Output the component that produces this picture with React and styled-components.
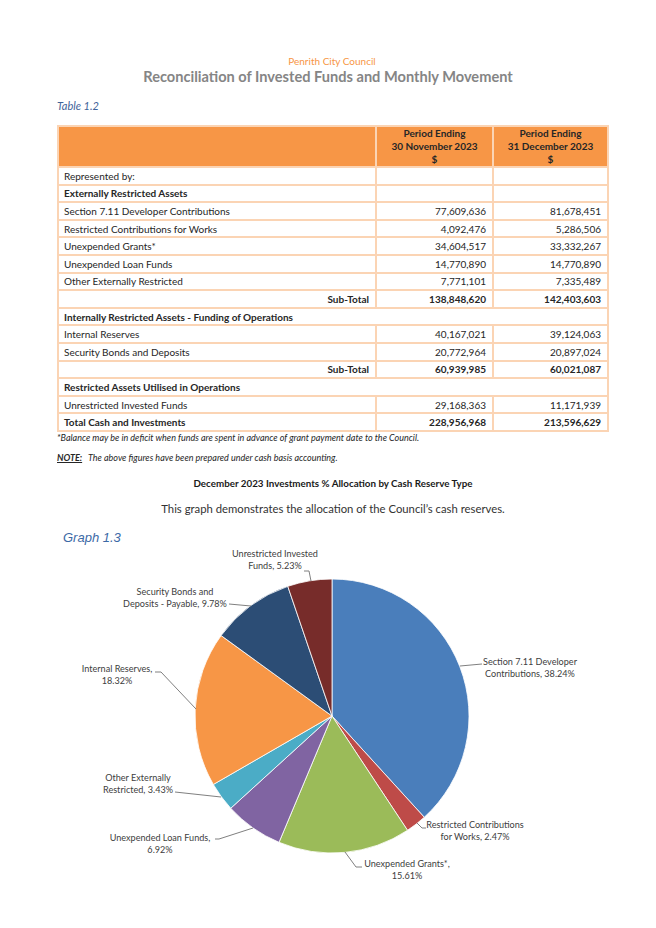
import React from 'react';
import styled, { createGlobalStyle } from 'styled-components';

const GlobalStyle = createGlobalStyle`
  body {
    margin: 0;
    background: #fff;
    font-family: Lato, 'Open Sans', sans-serif;
    color: #262626;
  }
`;

const Page = styled.div`
  width: 656px;
  min-height: 928px;
  box-sizing: border-box;
  padding: 55px 47px 0 57px;
  display: flex;
  flex-direction: column;
`;

const OrgName = styled.div`
  text-align: center;
  font-size: 10px;
  line-height: 12px;
  color: #f79646;
  margin-right: 2px;
`;

const Title = styled.h1`
  margin: 0;
  text-align: center;
  font-size: 14.6px;
  line-height: 20px;
  font-weight: 700;
  color: #858585;
  margin-right: 10px;
`;

const Caption = styled.div`
  margin-top: 12px;
  font-size: 11px;
  line-height: 14px;
  font-style: italic;
  color: #3f6399;
`;

const Grid = styled.div`
  margin-top: 12px;
  width: 552px;
  box-sizing: border-box;
  display: grid;
  grid-template-columns: 316px 115px 113px;
  gap: 2px;
  padding: 2px;
  background: #fbd4b4;
`;

const Cell = styled.div`
  background: ${(p) => (p.$head ? '#f79646' : '#fff')};
  grid-column: ${(p) => (p.$span ? '1 / -1' : 'auto')};
  height: ${(p) => (p.$head ? '39px' : '15.6px')};
  box-sizing: border-box;
  padding: ${(p) => (p.$head ? '0 4px' : '0 6px 0 5px')};
  display: flex;
  flex-direction: ${(p) => (p.$head ? 'column' : 'row')};
  align-items: center;
  justify-content: ${(p) =>
    p.$head ? 'flex-start' : p.$align === 'right' ? 'flex-end' : 'flex-start'};
  font-size: 10px;
  line-height: ${(p) => (p.$head ? '13px' : '14px')};
  font-weight: ${(p) => (p.$bold || p.$head ? 700 : 400)};
  color: #262626;
  white-space: nowrap;
`;

const Footnote = styled.div`
  font-size: 9px;
  line-height: 12px;
  font-style: italic;
  color: #262626;
  margin-top: ${(p) => p.$gap || 0}px;
`;

const NoteTag = styled.span`
  font-weight: 700;
  text-decoration: underline;
  margin-right: 4px;
`;

const ChartTitle = styled.div`
  margin-top: 12px;
  text-align: center;
  font-size: 9.8px;
  line-height: 14px;
  font-weight: 700;
  color: #1a1a1a;
`;

const Subtitle = styled.div`
  margin-top: 11px;
  text-align: center;
  font-size: 11.3px;
  line-height: 16px;
  color: #333;
`;

const GraphLabel = styled.div`
  margin-top: 13px;
  padding-left: 6px;
  font-family: 'Liberation Sans', Arial, sans-serif;
  font-size: 13px;
  line-height: 16px;
  font-style: italic;
  color: #3c69a6;
`;

const ChartSvg = styled.svg`
  display: block;
  margin-left: -57px;
  overflow: visible;
`;

const rows = [
  { label: 'Represented by:', a: '', b: '' },
  { label: 'Externally Restricted Assets', a: '', b: '', bold: true },
  { label: 'Section 7.11 Developer Contributions', a: '77,609,636', b: '81,678,451' },
  { label: 'Restricted Contributions for Works', a: '4,092,476', b: '5,286,506' },
  { label: 'Unexpended Grants*', a: '34,604,517', b: '33,332,267' },
  { label: 'Unexpended Loan Funds', a: '14,770,890', b: '14,770,890' },
  { label: 'Other Externally Restricted', a: '7,771,101', b: '7,335,489' },
  { label: 'Sub-Total', a: '138,848,620', b: '142,403,603', bold: true, right: true },
  { label: 'Internally Restricted Assets - Funding of Operations', span: true },
  { label: 'Internal Reserves', a: '40,167,021', b: '39,124,063' },
  { label: 'Security Bonds and Deposits', a: '20,772,964', b: '20,897,024' },
  { label: 'Sub-Total', a: '60,939,985', b: '60,021,087', bold: true, right: true },
  { label: 'Restricted Assets Utilised in Operations', span: true },
  { label: 'Unrestricted Invested Funds', a: '29,168,363', b: '11,171,939' },
  { label: 'Total Cash and Investments', a: '228,956,968', b: '213,596,629', bold: true, boldNums: true },
];

const CX = 332;
const CY = 716;
const R = 137;

const slices = [
  { pct: 38.24, color: '#4a7ebb' },
  { pct: 2.47, color: '#be4b48' },
  { pct: 15.61, color: '#9bbb59' },
  { pct: 6.92, color: '#8064a2' },
  { pct: 3.43, color: '#4bacc6' },
  { pct: 18.32, color: '#f79646' },
  { pct: 9.78, color: '#2c4d75' },
  { pct: 5.23, color: '#772c2a' },
];

const labels = [
  { x: 275, y: 553, lines: ['Unrestricted Invested', 'Funds, 5.23%'], lead: 'M311,581 L309,571 L304,571' },
  { x: 175, y: 591, lines: ['Security Bonds and', 'Deposits - Payable, 9.78%'], lead: 'M251,606 L229,604' },
  { x: 530, y: 661, lines: ['Section 7.11 Developer', 'Contributions, 38.24%'], lead: 'M460,666 L482,664' },
  { x: 117, y: 668, lines: ['Internal Reserves,', '18.32%'], lead: 'M196,709 L161,672 L155,672' },
  { x: 138, y: 777, lines: ['Other Externally', 'Restricted, 3.43%'], lead: 'M221,797 L175,792' },
  { x: 475, y: 824, lines: ['Restricted Contributions', 'for Works, 2.47%'], lead: 'M417,823 L422,828 L426,828' },
  { x: 160, y: 837, lines: ['Unexpended Loan Funds,', '6.92%'], lead: 'M253,828 L219,839 L215,839' },
  { x: 407, y: 863, lines: ['Unexpended Grants*,', '15.61%'], lead: 'M345,852 L356,867 L362,867' },
];

const point = (deg) => {
  const rad = (deg * Math.PI) / 180;
  return [CX + R * Math.sin(rad), CY - R * Math.cos(rad)];
};

const PieChart = () => {
  let start = 0;
  const paths = slices.map((s) => {
    const end = start + (s.pct / 100) * 360;
    const [x1, y1] = point(start);
    const [x2, y2] = point(end);
    const large = end - start > 180 ? 1 : 0;
    const d = `M${CX},${CY} L${x1},${y1} A${R},${R} 0 ${large} 1 ${x2},${y2} Z`;
    start = end;
    return <path key={s.color} d={d} fill={s.color} stroke="#fff" strokeWidth="0.8" />;
  });

  return (
    <ChartSvg width="656" height="340" viewBox="0 546 656 340">
      {paths}
      {labels.map((l) => (
        <g key={l.lines[0]}>
          <path d={l.lead} fill="none" stroke="#808080" strokeWidth="1" />
          {l.lines.map((t, i) => (
            <text
              key={t}
              x={l.x}
              y={l.y + i * 12.5}
              textAnchor="middle"
              dominantBaseline="central"
              fontFamily="Lato, sans-serif"
              fontSize="9.1"
              fill="#404040"
            >
              {t}
            </text>
          ))}
        </g>
      ))}
    </ChartSvg>
  );
};

const App = () => {
  return (
    <Page>
      <GlobalStyle />
      <OrgName>Penrith City Council</OrgName>
      <Title>Reconciliation of Invested Funds and Monthly Movement</Title>
      <Caption>Table 1.2</Caption>
      <Grid>
        <Cell $head />
        <Cell $head>
          <span>Period Ending</span>
          <span>30 November 2023</span>
          <span>$</span>
        </Cell>
        <Cell $head>
          <span>Period Ending</span>
          <span>31 December 2023</span>
          <span>$</span>
        </Cell>
        {rows.map((r, i) =>
          r.span ? (
            <Cell key={i} $span $bold>
              {r.label}
            </Cell>
          ) : (
            <React.Fragment key={i}>
              <Cell $bold={r.bold} $align={r.right ? 'right' : 'left'}>
                {r.label}
              </Cell>
              <Cell $align="right" $bold={r.right || r.boldNums}>
                {r.a}
              </Cell>
              <Cell $align="right" $bold={r.right || r.boldNums}>
                {r.b}
              </Cell>
            </React.Fragment>
          )
        )}
      </Grid>
      <Footnote>*Balance may be in deficit when funds are spent in advance of grant payment date to the Council.</Footnote>
      <Footnote $gap={8}>
        <NoteTag>NOTE:</NoteTag> The above figures have been prepared under cash basis accounting.
      </Footnote>
      <ChartTitle>December 2023 Investments % Allocation by Cash Reserve Type</ChartTitle>
      <Subtitle>This graph demonstrates the allocation of the Council’s cash reserves.</Subtitle>
      <GraphLabel>Graph 1.3</GraphLabel>
      <PieChart />
    </Page>
  );
};

export default App;
